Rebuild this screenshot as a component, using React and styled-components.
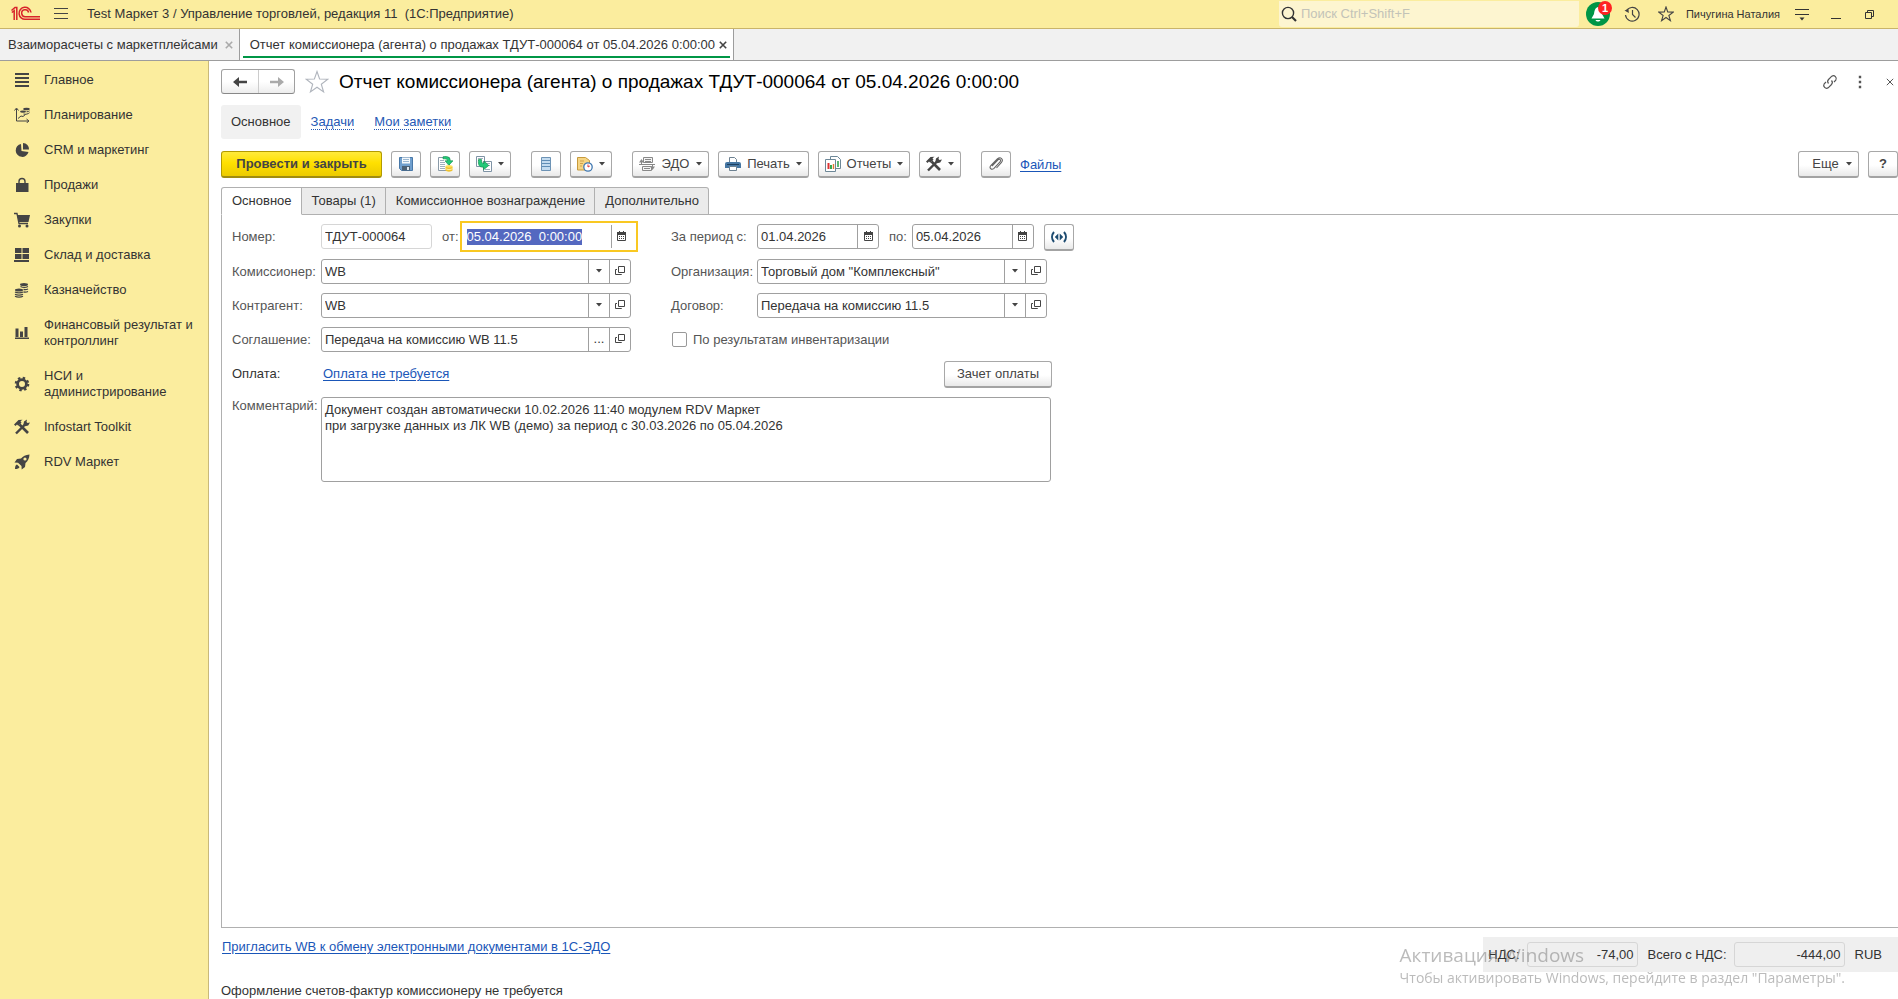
import React, { useEffect, useRef } from 'react';
import styled, { createGlobalStyle, css } from 'styled-components';

const GlobalStyle = createGlobalStyle`
    * {
        box-sizing: border-box;
    }
    body {
        margin: 0;
        background: #fff;
    }
    body, button, input, textarea {
        font-family: 'Liberation Sans', Arial, sans-serif;
        font-size: 13px;
        line-height: 16px;
        color: #333;
    }
    button {
        padding: 0;
        border: 0;
        background: none;
        white-space: nowrap;
    }
    svg {
        display: block;
        flex: none;
    }
`;

const S = {
    App: styled.div`
        display: flex;
        flex-flow: column;
        height: 100vh;
        overflow: hidden;
    `,
    TopBar: styled.header`
        display: flex;
        align-items: center;
        flex: none;
        height: 29px;
        padding: 0 8px 1px 11px;
        border-bottom: 1px solid #c9b46a;
        background-color: #fbed9e;
    `,
    AppTitle: styled.div`
        flex: 1;
        margin-left: 19px;
        white-space: pre;
    `,
    Burger: styled.button`
        margin-left: 14px;
    `,
    Search: styled.label`
        display: flex;
        align-items: center;
        gap: 4px;
        width: 300px;
        height: 26px;
        margin-right: 7px;
        padding-left: 2px;
        border-radius: 0 0 3px 3px;
        background-color: #fdf5d0;

        & input {
            flex: 1;
            min-width: 0;
            padding: 0;
            border: 0;
            outline: 0;
            background: none;
        }
        & input::placeholder {
            color: #c3c3b8;
        }
    `,
    Bell: styled.button`
        position: relative;
        width: 24px;
        height: 24px;
    `,
    Badge: styled.span`
        position: absolute;
        top: -1px;
        right: -2px;
        width: 14px;
        height: 14px;
        border-radius: 7px;
        background-color: #f22;
        color: #fff;
        font-size: 11px;
        font-weight: 700;
        line-height: 14px;
        text-align: center;
    `,
    TopIcons: styled.div`
        display: flex;
        align-items: center;
        gap: 18px;
        margin: 0 12px 0 14px;
    `,
    User: styled.button`
        font-size: 11px;
    `,
    WindowTabs: styled.nav`
        display: flex;
        flex: none;
        height: 32px;
        border-bottom: 1px solid #9d9d9d;
        background-color: #f1f1f1;
    `,
    WindowTab: styled.div`
        display: flex;
        align-items: center;
        gap: ${p => (p.$active ? 4 : 7)}px;
        position: relative;
        padding: 0 6px 0 ${p => (p.$active ? 10 : 8)}px;
        border-right: 1px solid #9d9d9d;
        background-color: ${p => (p.$active ? '#fff' : 'transparent')};

        ${p => p.$active && css`
            &::after {
                content: '';
                position: absolute;
                left: 3px;
                right: 3px;
                bottom: 2px;
                height: 2px;
                background-color: #009646;
            }
        `}
    `,
    Body: styled.div`
        display: flex;
        flex: 1;
        min-height: 0;
    `,
    Sidebar: styled.nav`
        flex: none;
        width: 209px;
        padding-top: 2px;
        border-right: 1px solid #c9b97a;
        background-color: #fbed9e;
    `,
    SideItem: styled.a`
        display: grid;
        grid-template-columns: 16px 1fr;
        gap: 14px;
        align-items: center;
        padding: 9px 10px 10px 14px;
        color: #333;
        text-decoration: none;
    `,
    Main: styled.main`
        display: flex;
        flex-flow: column;
        flex: 1;
        min-width: 0;
        padding-left: 12px;
    `,
    TitleRow: styled.div`
        display: flex;
        align-items: center;
        height: 41px;
    `,
    History: styled.div`
        display: flex;
        height: 25px;
        border: 1px solid #a0a0a0;
        border-bottom-color: #888;
        border-radius: 3px;
        background: linear-gradient(#fff 50%, #ededed);

        & button {
            display: grid;
            place-items: center;
            width: 36px;
        }
        & button + button {
            border-left: 1px solid #ccc;
        }
    `,
    StarButton: styled.button`
        margin: 0 10px;
    `,
    Title: styled.h1`
        flex: 1;
        margin: 0;
        color: #000;
        font-size: 19px;
        font-weight: 400;
        line-height: 24px;
        white-space: nowrap;
    `,
    TitleTools: styled.div`
        display: flex;
        align-items: center;
        gap: 14px;

        & button {
            display: grid;
            place-items: center;
            width: 16px;
            height: 16px;
        }
    `,
    FormNav: styled.nav`
        display: flex;
        align-items: center;
        height: 34px;
        margin-top: 3px;

        & span {
            margin-right: 10px;
            padding: 9px 10px;
            border-radius: 3px;
            background-color: #f1f1f1;
        }
        & a {
            margin-right: 20px;
            border-bottom: 1px dotted #2458b5;
            color: #2458b5;
            line-height: 14px;
            text-decoration: none;
        }
    `,
    Toolbar: styled.div`
        display: flex;
        gap: 9px;
        margin: 12px 0 9px;
    `,
    ToolGroup: styled.div`
        display: flex;
        align-items: center;
        gap: 9px;
        margin-right: ${p => (p.$wide ? 11 : 0)}px;
    `,
    Spacer: styled.div`
        flex: 1;
    `,
    Button: styled.button`
        display: flex;
        flex: none;
        align-items: center;
        justify-content: ${p => (p.$menu ? 'space-between' : 'center')};
        width: ${p => p.$width || 30}px;
        height: 27px;
        padding: ${p => (p.$menu ? '0 6px' : '0')};
        border: 1px solid #a8a8a8;
        border-bottom: 2px solid #a3a3a3;
        border-radius: 3px;
        background: linear-gradient(#fff 55%, #e9e9e9);
        color: #444;
        font-weight: ${p => (p.$bold ? 700 : 400)};
    `,
    PrimaryButton: styled.button`
        width: 161px;
        height: 27px;
        border: 1px solid #b39b00;
        border-bottom: 2px solid #a08c10;
        border-radius: 3px;
        background: linear-gradient(#ffea3c, #ffe000 45%, #eccb00);
        color: #444;
        font-weight: 700;
    `,
    Link: styled.a`
        color: #1a56b8;
        text-decoration: underline;
        text-underline-offset: 2px;
    `,
    Tabs: styled.div`
        display: flex;
        position: relative;
        z-index: 1;
        height: 28px;
    `,
    Tab: styled.button`
        padding: 0 9px 0 10px;
        border: 1px solid #b0b0b0;
        border-bottom-color: ${p => (p.$active ? '#fff' : '#b0b0b0')};
        border-radius: ${p => (p.$active ? '3px 0 0 0' : '0')};
        background-color: ${p => (p.$active ? '#fff' : '#ebebeb')};

        & + & {
            border-left: 0;
        }
        &:last-child {
            border-radius: 0 3px 0 0;
        }
    `,
    Panel: styled.section`
        flex: 1;
        min-height: 0;
        margin-top: -1px;
        padding: 9px 10px;
        border: 1px solid #b0b0b0;
        border-right: 0;
    `,
    Form: styled.form`
        display: grid;
        grid-template-columns: 89px 350px 86px 317px;
        grid-template-rows: 26px repeat(3, 25px) 27px auto;
        row-gap: 9px;
    `,
    Label: styled.label`
        padding-top: ${p => (p.$top ? 1 : 5)}px;
        color: ${p => (p.$dark ? '#333' : '#555')};
        white-space: nowrap;
    `,
    Cell: styled.div`
        display: flex;
        align-items: flex-start;
        gap: ${p => p.$gap || 0}px;
    `,
    Field: styled.div`
        display: flex;
        flex: none;
        width: ${p => p.$width}px;
        height: 25px;
        border: 1px solid ${p => (p.$readOnly ? '#d6d6d6' : '#a0a0a0')};
        border-radius: 3px;

        & input {
            flex: 1;
            min-width: 0;
            padding: 0 3px;
            border: 0;
            outline: 0;
            background: none;
            text-align: ${p => p.$align || 'left'};
        }
        & input::selection {
            background-color: #5468c0;
            color: #fff;
        }
        & button {
            display: grid;
            place-items: center;
            width: 21px;
            padding-bottom: 1px;
            border-left: 1px solid #a0a0a0;
        }

        ${p => p.$focused && css`
            height: 31px;
            margin-top: -3px;
            padding: 2px 4px 2px 2px;
            border: 2px solid #f9c822;
            border-radius: 0;
        `}
    `,
    CheckLabel: styled.label`
        display: flex;
        grid-column: 3 / 5;
        align-items: center;
        gap: 6px;
        padding-left: 1px;
        color: #555;

        & input {
            appearance: none;
            width: 15px;
            height: 15px;
            margin: 0;
            border: 1px solid #999;
            border-radius: 2px;
        }
    `,
    PayRow: styled.div`
        display: flex;
        grid-column: 2 / 5;
        justify-content: space-between;
        padding: 0 22px 0 2px;

        & a {
            margin-top: 5px;
        }
    `,
    Comment: styled.textarea`
        grid-column: 2 / 5;
        width: 730px;
        height: 85px;
        padding: 4px 3px;
        border: 1px solid #a0a0a0;
        border-radius: 3px;
        outline: 0;
        resize: none;
    `,
    Footer: styled.footer`
        display: flex;
        flex: none;
        justify-content: space-between;
        align-items: flex-start;
        height: 71px;
        padding-top: 9px;
    `,
    FooterNotes: styled.div`
        display: flex;
        flex-flow: column;
        gap: 28px;
        padding-top: 2px;

        & a {
            margin-left: 1px;
        }
    `,
    Totals: styled.div`
        display: flex;
        align-items: center;
        gap: 10px;
        height: 35px;
        padding: 0 16px 0 5px;
        background-color: #efefef;

        & label {
            display: flex;
            align-items: center;
            gap: 7px;
        }
    `,
    Watermark: styled.div`
        position: fixed;
        right: 53px;
        bottom: 11px;
        color: rgba(120, 120, 120, 0.5);
        font-family: 'Open Sans', 'Noto Sans', sans-serif;
        font-size: 14px;
        line-height: 20px;
        pointer-events: none;

        & strong {
            display: block;
            font-size: 19px;
            font-weight: 400;
            line-height: 26px;
        }
    `,
};

/* ---------- icons ---------- */

const Icon = ({ w = 16, h = w, children, ...rest }) => (
    <svg width={w} height={h} viewBox={`0 0 ${w} ${h}`} fill="none" aria-hidden="true" {...rest}>
        {children}
    </svg>
);

const Logo = () => (
    <Icon w={29} h={15} stroke="#d8232a" strokeWidth="1.5">
        <path d="M.5 4.500 4 1.500h1.800V14M.8 6.500 3.200 4.800V14" />
        <path d="M20 6.500A6 6 0 1 0 14.500 13.300H29" />
        <path d="M17.600 6.500A3.500 3.500 0 1 0 14.500 10.700H29" />
    </Icon>
);

const BurgerIcon = () => (
    <Icon w={14} h={13} stroke="#444" strokeWidth="1"><path d="M0 1.500h14M0 6.500h14M0 11.500h14" /></Icon>
);

const SearchIcon = () => (
    <Icon stroke="#333" strokeWidth="1.4"><circle cx="7" cy="7" r="5.6" /><path d="m11 11 4 4" strokeWidth="2.2" /></Icon>
);

const BellIcon = () => (
    <Icon w={24}>
        <circle cx="12" cy="12" r="12" fill="#009646" />
        <path d="M12 5c-3 1-3.600 4-4 7l-2.500 4.500h13L16 12c-.4-3-1-6-4-7zM9.500 18h5c-1 2-4 2-5 0z" fill="#fff" />
    </Icon>
);

const ClockIcon = () => (
    <Icon stroke="#444" strokeWidth="1.2">
        <path d="M2.300 5A6.800 6.800 0 1 1 1.500 9" />
        <path d="M8.500 4v4.500l3 3" />
        <path d="M.5 4.500 4.500 3l.3 4z" fill="#444" stroke="none" />
    </Icon>
);

const StarIcon = ({ size = 16, color = '#444', width = 1.1 }) => (
    <svg width={size} height={size} viewBox="0 0 24 24" fill="none" stroke={color} strokeWidth={(width * 24) / size} aria-hidden="true">
        <path d="M12 1.500 14.600 9l8.200.2-6.500 5 2.300 7.800L12 17.300 5.400 22l2.300-7.800-6.500-5L9.400 9z" />
    </svg>
);

const PanelMenuIcon = () => (
    <Icon stroke="#333" strokeWidth="1"><path d="M1 3.500h14M1 8.500h14" /><path d="M5.500 11.500h5L8 14.500z" fill="#333" stroke="none" /></Icon>
);

const Caret = () => (
    <Icon w={6} h={4}><path d="M0 0h6L3 3.500z" fill="#444" /></Icon>
);

const CrossIcon = ({ size = 8, color = '#444', width = 1.6 }) => (
    <svg width={size} height={size} viewBox="0 0 8 8" stroke={color} strokeWidth={width} aria-hidden="true">
        <path d="m.8.8 6.400 6.400M7.200.8.8 7.200" />
    </svg>
);

const ArrowIcon = ({ back, color }) => (
    <Icon w={14} h={10}>
        {back
            ? <path d="M0 5 6 0v3.700h8v2.600H6V10z" fill={color} />
            : <path d="M14 5 8 0v3.700H0v2.600h8V10z" fill={color} />}
    </Icon>
);

const LinkIcon = () => (
    <Icon stroke="#555" strokeWidth="1.200">
        <path d="M6.500 9.500a3 3 0 0 1 0-4l3.300-3.300a2.900 2.900 0 0 1 4 4L12 8" />
        <path d="M9.500 6.500a3 3 0 0 1 0 4l-3.300 3.300a2.900 2.900 0 0 1-4-4L4 8" />
    </Icon>
);

const DotsIcon = () => (
    <Icon w={4} h={14}><path d="M.8.8h2.400v2.400H.8zM.8 5.800h2.400v2.400H.8zM.8 10.800h2.400v2.400H.8z" fill="#555" /></Icon>
);

const CalendarIcon = () => (
    <Icon w={9} h={10}>
        <path d="M.5 2h8v7.500h-8z" stroke="#444" />
        <path d="M0 1h9v3H0zM2 0h1v2H2zM6 0h1v2H6z" fill="#444" />
        <path d="M2 5.500h5M2 7.500h5" stroke="#444" strokeDasharray="1 1" />
    </Icon>
);

const OpenIcon = () => (
    <Icon w={10} h={10} stroke="#444" strokeWidth="1"><path d="M3.500.5h6v6h-6z" /><path d="M2 3.500H.5v5h6V8" /></Icon>
);

const ToolsIcon = ({ size = 16 }) => (
    <svg width={size} height={size} viewBox="0 0 16 16" fill="none" aria-hidden="true">
        <path d="m2 14.500 9.500-9.500" stroke="#444" strokeWidth="2.400" />
        <path d="M10 2.500 13 .5l-.5 2.500 1 1 2.500-.6-1.800 3.200-3.200.6-1.600-1.500z" fill="#444" />
        <path d="m5.500 5.500 8.500 8.500" stroke="#444" strokeWidth="2.600" />
        <path d="M0 5.500 4.500 1l4-.2L6.500 2.200l1 1.500-3.200 3L3 5.500 1.500 7z" fill="#444" />
    </svg>
);

const MainIcon = () => (
    <Icon stroke="#444" strokeWidth="2"><path d="M1 2h14M1 6h14M1 10h14M1 14h14" /></Icon>
);

const PlanIcon = () => (
    <Icon>
        <path d="M2.500 2v12h12M.5 3.500l2-2.500 2 2.500M12.500 12l2.500 2-2.500 2M4 11.500 7 9l2 .5 2.500-2" stroke="#444" />
        <ellipse cx="12.500" cy="2" rx="3.300" ry="1.300" fill="#444" />
        <ellipse cx="9" cy="4.600" rx="3" ry="1.200" fill="#444" />
        <path d="M9.500 7c2 .8 5-.2 6-1.300M12.500 4.800c1.300 0 2.500-.4 3-.9" stroke="#444" />
    </Icon>
);

const PieIcon = () => (
    <Icon>
        <path d="M7 2a6.500 6.500 0 1 0 7.500 8L7.500 9z" fill="#444" />
        <path d="M9 1a6 6 0 0 1 6 6.500H9z" fill="#444" />
    </Icon>
);

const BagIcon = () => (
    <Icon><path d="M2 6h12.500v9H2z" fill="#444" /><path d="M5 8V4.500C5 .5 11 .5 11 4.500V8" stroke="#444" strokeWidth="1.400" /></Icon>
);

const CartIcon = () => (
    <Icon>
        <path d="M0 1.500h3l2 10h9" stroke="#444" strokeWidth="1.300" />
        <path d="M3 3h13l-1.500 7H5z" fill="#444" />
        <circle cx="5.500" cy="14" r="1.500" fill="#444" /><circle cx="13" cy="14" r="1.500" fill="#444" />
    </Icon>
);

const StockIcon = () => (
    <Icon><path d="M1 1h6.500v5H1zM8.500 1H15v5H8.500zM1 7h6.500v5H1zM8.500 7H15v5H8.500zM0 13h15v2H0z" fill="#444" /></Icon>
);

const CoinsIcon = () => (
    <Icon>
        <ellipse cx="10" cy="2.500" rx="4" ry="1.500" fill="#444" />
        <path d="M6.500 4.500c2 1 5.500 1 7.500 0M9.500 7.500c2 .3 3.500 0 4.500-.5M9.500 10c2 .3 3.500 0 4.500-.5" stroke="#444" strokeWidth="1.300" />
        <ellipse cx="5" cy="8" rx="4" ry="1.500" fill="#444" />
        <path d="M1 10c2 1.200 6 1.200 8 0M1 12.300c2 1.200 6 1.200 8 0M1 14.300c2 1.200 6 1.200 8 0" stroke="#444" strokeWidth="1.200" />
    </Icon>
);

const BarsIcon = () => (
    <Icon><path d="M1.500 3.500h3V12h-3zM6 6.500h3V12H6zM10.500 2h3v10h-3zM1 12.500h14V14H1z" fill="#444" /></Icon>
);

const GearIcon = () => (
    <Icon stroke="#444">
        <circle cx="8" cy="8" r="4.400" strokeWidth="2.800" />
        <circle cx="8" cy="8" r="6.200" strokeWidth="2.200" strokeDasharray="2.430 2.440" />
    </Icon>
);

const RocketIcon = () => (
    <Icon>
        <path d="M15.500.5c-4 .2-6.500 1.700-8.500 4L3 5 .5 8.500l3.500.3L7.500 12l.2 3.500 3.300-2.500.5-4c2.300-2 3.800-4.500 4-8.500z" fill="#444" />
        <circle cx="11" cy="5" r="1.600" fill="#fbed9e" />
        <path d="M3 10.500c-1.500.5-2 2-2 4.500 2.500 0 4-.5 4.500-2z" fill="#444" />
    </Icon>
);

const SaveIcon = () => (
    <Icon>
        <path d="M1.500 1.500h13v13h-11l-2-2z" fill="#6f9fce" stroke="#4878a8" />
        <path d="M4 1.500h8v6H4z" fill="#f4f8fb" /><path d="M5 3.500h6M5 5.500h6" stroke="#9bb8d2" />
        <path d="M4 10h8v4.500H4z" fill="#4b6074" /><path d="M9 11h2v3H9z" fill="#dfe8ef" />
    </Icon>
);

const PostIcon = () => (
    <Icon>
        <path d="M1.500 1.500h11v13h-11z" fill="#fff" stroke="#8a9aa8" />
        <path d="M3 4.500h4M3 6.500h5M3 8.500h5M3 10.500h5M3 12.500h5" stroke="#9fb0bd" />
        <path d="M6 .8c4.500-1 7.300.5 7.300 4H16l-4.200 4.500L8 4.800h2.500c0-2-2-2-4.500-2z" fill="#22c878" stroke="#0c8a45" strokeWidth=".6" />
        <ellipse cx="12" cy="10.500" rx="3.500" ry="1.500" fill="#ffe05a" />
        <path d="M8.500 10.500v4c1 1.500 6 1.500 7 0v-4c-1 1.500-6 1.500-7 0z" fill="#efc22f" />
        <path d="M8.500 12.500c1 1.400 6 1.400 7 0" stroke="#fff0a0" />
    </Icon>
);

const BasedOnIcon = () => (
    <Icon>
        <path d="M.5.5h8v10h-8z" fill="#fff" stroke="#7f93a5" /><path d="M2 2.500h5M2 4.500h2" stroke="#9fb0bd" />
        <path d="M7.500 5.500h8v10h-8z" fill="#fff" stroke="#7f93a5" /><path d="M10 7.500h4M12 9.500h2M9 13.500h5" stroke="#9fb0bd" />
        <path d="M2.500 3.500C2 9 3 11.300 7.500 11.200v2.600l5.300-4.300L8 5v2.500C6 7.500 5.500 6 5.500 3.500z" fill="#22c878" stroke="#0c8a45" strokeWidth=".6" />
    </Icon>
);

const ListIcon = () => (
    <Icon>
        <path d="M3.500 1.500h9v13h-9z" fill="#c3dbef" stroke="#6d93b5" />
        <path d="M4 4.500h8M4 7.500h8M4 10.500h8" stroke="#5f8db5" strokeWidth="1" />
    </Icon>
);

const TaskIcon = () => (
    <Icon>
        <path d="M.5 1.500h8l4 3v9.500H.5z" fill="#f6d583" stroke="#c79a3c" /><path d="M3 5h4M3 7.500h3M3 10h2" stroke="#cfa34b" />
        <circle cx="11" cy="11" r="4.200" fill="#fff" stroke="#3f77b0" strokeWidth="1.300" />
        <path d="M11 8.500V11l1.800-1" stroke="#d33" />
    </Icon>
);

const EdoIcon = () => (
    <Icon>
        <path d="M4.500 1.500h9v5h-9zM3.500 10.500h9v4h-9z" fill="#f4f4f4" stroke="#888" />
        <path d="M6 3.500h6M0 8.500h16M6 5.500h6M5 12.500h6" stroke="#888" />
        <path d="M2.500 8V5M13.500 9v3" stroke="#888" />
        <path d="M0 6.500 2.500 3 5 6.500zM11 10.500l2.500 3.500 2.500-3.500z" fill="#888" />
    </Icon>
);

const PrintIcon = () => (
    <Icon>
        <path d="M4.500 1.500h5l2 2V7h-7z" fill="#fff" stroke="#6d8191" />
        <path d="M2 6h12a2 2 0 0 1 2 2v4H0V8a2 2 0 0 1 2-2z" fill="#4677a3" />
        <path d="M2 8.500h12" stroke="#1d3f5e" /><path d="M4.500 10.500h7v4h-7z" fill="#fff" stroke="#6d8191" />
    </Icon>
);

const ReportIcon = () => (
    <Icon>
        <path d="M5.500.5h7l3 3v9h-10z" fill="#fff" stroke="#6d8797" />
        <path d="M.5 3.500h10v12H.5z" fill="#fff" stroke="#6d8797" />
        <path d="M13 5v6" stroke="#35a853" strokeWidth="1.600" />
        <path d="M3.500 7v6" stroke="#d33" strokeWidth="2" /><path d="M6 9v4" stroke="#35a853" strokeWidth="2" /><path d="M8.500 8v5" stroke="#e07a30" strokeWidth="1.400" />
    </Icon>
);

const ClipIcon = () => (
    <Icon stroke="#666" strokeWidth="1.100">
        <path d="m4 10 6-6.200c1.600-1.500 3.500.4 2 2L6 12.300c-2.600 2.300-5.300-.6-3-3L9.300 3c3.300-3 6.700.6 4 3.700L8.500 12" />
    </Icon>
);

const PeriodIcon = () => (
    <Icon stroke="#1d4b70" strokeWidth="2">
        <path d="M3 3c-2.600 3-2.600 7 0 10M13 3c2.600 3 2.600 7 0 10" />
        <path d="M7.300 4.500v7L3.800 8zM8.700 4.500v7L12.200 8z" fill="#1d4b70" stroke="none" />
    </Icon>
);

/* ---------- parts ---------- */

const sections = [
    ['Главное', MainIcon],
    ['Планирование', PlanIcon],
    ['CRM и маркетинг', PieIcon],
    ['Продажи', BagIcon],
    ['Закупки', CartIcon],
    ['Склад и доставка', StockIcon],
    ['Казначейство', CoinsIcon],
    ['Финансовый результат и контроллинг', BarsIcon],
    ['НСИ и администрирование', GearIcon],
    ['Infostart Toolkit', ToolsIcon],
    ['RDV Маркет', RocketIcon],
];

const docName = 'Отчет комиссионера (агента) о продажах ТДУТ-000064 от 05.04.2026 0:00:00';

const comment = `Документ создан автоматически 10.02.2026 11:40 модулем RDV Маркет
при загрузке данных из ЛК WB (демо) за период с 30.03.2026 по 05.04.2026`;

const MenuButton = ({ icon, label, text, width = 42 }) => (
    <S.Button type="button" $menu $width={width} aria-label={label || text}>
        {icon}
        {text && <span>{text}</span>}
        <Caret />
    </S.Button>
);

const DateField = ({ id, value }) => (
    <S.Field $width={122}>
        <input id={id} defaultValue={value} />
        <button type="button" aria-label="Календарь"><CalendarIcon /></button>
    </S.Field>
);

const RefField = ({ id, value, width, dots }) => (
    <S.Field $width={width}>
        <input id={id} defaultValue={value} />
        <button type="button" aria-label="Выбрать">{dots ? '...' : <Caret />}</button>
        <button type="button" aria-label="Открыть"><OpenIcon /></button>
    </S.Field>
);

const DocForm = () => {
    const dateRef = useRef(null);

    useEffect(() => {
        dateRef.current.focus();
        dateRef.current.select();
    }, []);

    return (
        <S.Form>
            <S.Label htmlFor="number">Номер:</S.Label>
            <S.Cell $gap={10}>
                <S.Field $width={111} $readOnly>
                    <input id="number" readOnly value="ТДУТ-000064" />
                </S.Field>
                <S.Cell $gap={1}>
                    <S.Label htmlFor="date">от:</S.Label>
                    <S.Field $width={178} $focused>
                        <input id="date" ref={dateRef} defaultValue="05.04.2026  0:00:00" />
                        <button type="button" aria-label="Календарь"><CalendarIcon /></button>
                    </S.Field>
                </S.Cell>
            </S.Cell>
            <S.Label htmlFor="from">За период с:</S.Label>
            <S.Cell $gap={10}>
                <DateField id="from" value="01.04.2026" />
                <S.Cell $gap={5}>
                    <S.Label htmlFor="to">по:</S.Label>
                    <DateField id="to" value="05.04.2026" />
                </S.Cell>
                <S.Button type="button" aria-label="Выбрать период"><PeriodIcon /></S.Button>
            </S.Cell>

            <S.Label htmlFor="agent">Комиссионер:</S.Label>
            <RefField id="agent" value="WB" width={310} />
            <S.Label htmlFor="org">Организация:</S.Label>
            <RefField id="org" value={'Торговый дом "Комплексный"'} width={290} />

            <S.Label htmlFor="partner">Контрагент:</S.Label>
            <RefField id="partner" value="WB" width={310} />
            <S.Label htmlFor="contract">Договор:</S.Label>
            <RefField id="contract" value="Передача на комиссию 11.5" width={290} />

            <S.Label htmlFor="agreement">Соглашение:</S.Label>
            <RefField id="agreement" value="Передача на комиссию WB 11.5" width={310} dots />
            <S.CheckLabel>
                <input type="checkbox" />
                По результатам инвентаризации
            </S.CheckLabel>

            <S.Label as="span" $dark>Оплата:</S.Label>
            <S.PayRow>
                <S.Link href="#payment">Оплата не требуется</S.Link>
                <S.Button type="button" $width={108}>Зачет оплаты</S.Button>
            </S.PayRow>

            <S.Label htmlFor="comment" $top>Комментарий:</S.Label>
            <S.Comment id="comment" defaultValue={comment} />
        </S.Form>
    );
};

const App = () => (
    <>
        <GlobalStyle />
        <S.App>
            <S.TopBar>
                <Logo />
                <S.Burger aria-label="Меню"><BurgerIcon /></S.Burger>
                <S.AppTitle>{'Test Маркет 3 / Управление торговлей, редакция 11  (1С:Предприятие)'}</S.AppTitle>
                <S.Search>
                    <SearchIcon />
                    <input aria-label="Поиск" placeholder="Поиск Ctrl+Shift+F" />
                </S.Search>
                <S.Bell aria-label="Уведомления"><BellIcon /><S.Badge>1</S.Badge></S.Bell>
                <S.TopIcons>
                    <button aria-label="История"><ClockIcon /></button>
                    <button aria-label="Избранное"><StarIcon /></button>
                </S.TopIcons>
                <S.User>Пичугина Наталия</S.User>
                <S.TopIcons>
                    <button aria-label="Настройки"><PanelMenuIcon /></button>
                    <button aria-label="Свернуть"><Icon stroke="#333"><path d="M3 12.500h10" /></Icon></button>
                    <button aria-label="Восстановить">
                        <Icon stroke="#333"><path d="M3.500 6.500h6v6h-6zM5.500 6V4.500h6v6H10" /></Icon>
                    </button>
                </S.TopIcons>
            </S.TopBar>

            <S.WindowTabs>
                <S.WindowTab>
                    <button>Взаиморасчеты с маркетплейсами</button>
                    <button aria-label="Закрыть"><CrossIcon color="#aaa" /></button>
                </S.WindowTab>
                <S.WindowTab $active>
                    <button>{docName}</button>
                    <button aria-label="Закрыть"><CrossIcon /></button>
                </S.WindowTab>
            </S.WindowTabs>

            <S.Body>
                <S.Sidebar>
                    {sections.map(([name, SectionIcon]) => (
                        <S.SideItem key={name} href="#section">
                            <SectionIcon />
                            {name}
                        </S.SideItem>
                    ))}
                </S.Sidebar>

                <S.Main>
                    <S.TitleRow>
                        <S.History>
                            <button aria-label="Назад"><ArrowIcon back color="#444" /></button>
                            <button aria-label="Вперед"><ArrowIcon color="#aaa" /></button>
                        </S.History>
                        <S.StarButton aria-label="В избранное"><StarIcon size={24} color="#b0b5bd" /></S.StarButton>
                        <S.Title>{docName}</S.Title>
                        <S.TitleTools>
                            <button aria-label="Ссылка"><LinkIcon /></button>
                            <button aria-label="Еще действия"><DotsIcon /></button>
                            <button aria-label="Закрыть"><CrossIcon width={1} color="#555" /></button>
                        </S.TitleTools>
                    </S.TitleRow>

                    <S.FormNav>
                        <span>Основное</span>
                        <a href="#tasks">Задачи</a>
                        <a href="#notes">Мои заметки</a>
                    </S.FormNav>

                    <S.Toolbar>
                        <S.ToolGroup $wide>
                            <S.PrimaryButton>Провести и закрыть</S.PrimaryButton>
                            <S.Button aria-label="Записать"><SaveIcon /></S.Button>
                            <S.Button aria-label="Провести"><PostIcon /></S.Button>
                            <MenuButton icon={<BasedOnIcon />} label="Создать на основании" />
                        </S.ToolGroup>
                        <S.ToolGroup $wide>
                            <S.Button aria-label="Структура"><ListIcon /></S.Button>
                            <MenuButton icon={<TaskIcon />} label="Задачи" />
                        </S.ToolGroup>
                        <S.ToolGroup $wide>
                            <MenuButton icon={<EdoIcon />} text="ЭДО" width={77} />
                            <MenuButton icon={<PrintIcon />} text="Печать" width={91} />
                            <MenuButton icon={<ReportIcon />} text="Отчеты" width={92} />
                            <MenuButton icon={<ToolsIcon />} label="Сервис" />
                        </S.ToolGroup>
                        <S.ToolGroup>
                            <S.Button aria-label="Присоединенные файлы"><ClipIcon /></S.Button>
                            <S.Link href="#files">Файлы</S.Link>
                        </S.ToolGroup>
                        <S.Spacer />
                        <S.ToolGroup>
                            <S.Button $menu $width={61}><span />Еще<Caret /></S.Button>
                            <S.Button $bold>?</S.Button>
                        </S.ToolGroup>
                    </S.Toolbar>

                    <S.Tabs>
                        <S.Tab $active>Основное</S.Tab>
                        <S.Tab>Товары (1)</S.Tab>
                        <S.Tab>Комиссионное вознаграждение</S.Tab>
                        <S.Tab>Дополнительно</S.Tab>
                    </S.Tabs>
                    <S.Panel>
                        <DocForm />
                    </S.Panel>

                    <S.Footer>
                        <S.FooterNotes>
                            <S.Link href="#edo">Пригласить WB к обмену электронными документами в 1С-ЭДО</S.Link>
                            <span>Оформление счетов-фактур комиссионеру не требуется</span>
                        </S.FooterNotes>
                        <S.Totals>
                            <label>
                                НДС:
                                <S.Field $width={111} $readOnly $align="right"><input readOnly value="-74,00" /></S.Field>
                            </label>
                            <label>
                                Всего с НДС:
                                <S.Field $width={111} $readOnly $align="right"><input readOnly value="-444,00" /></S.Field>
                            </label>
                            <span>RUB</span>
                        </S.Totals>
                    </S.Footer>
                </S.Main>
            </S.Body>

            <S.Watermark>
                <strong>Активация Windows</strong>
                Чтобы активировать Windows, перейдите в раздел "Параметры".
            </S.Watermark>
        </S.App>
    </>
);

export default App;
